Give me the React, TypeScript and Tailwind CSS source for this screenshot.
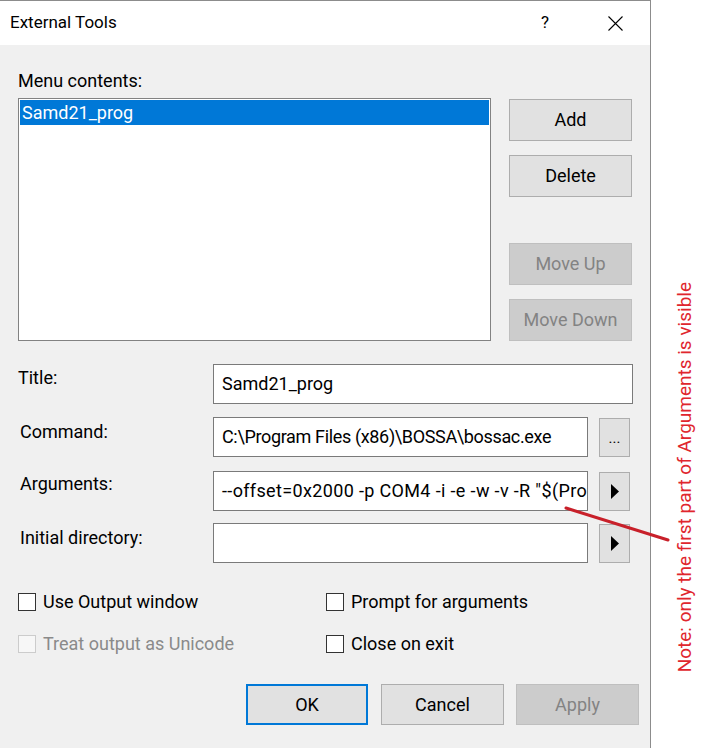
import type { FC, ReactNode } from 'react'

const Button: FC<{
  children: ReactNode
  disabled?: boolean
  focused?: boolean
  className?: string
}> = ({ children, disabled, focused, className = '' }) => {
  const look = disabled
    ? 'bg-[#cccccc] border border-[#bfbfbf] text-[#838383]'
    : focused
      ? 'bg-[#e1e1e1] border-2 border-[#0078d7] text-black'
      : 'bg-[#e1e1e1] border border-[#adadad] text-black'
  return (
    <div className={`flex items-center justify-center leading-[24px] ${look} ${className}`}>{children}</div>
  )
}

const Check: FC<{ label: string; disabled?: boolean }> = ({ label, disabled }) => (
  <div className="flex items-center h-[18px] gap-[7px]">
    <div
      className={
        disabled
          ? 'w-[18px] h-[18px] border border-[#cccccc] bg-[#f7f7f7]'
          : 'w-[18px] h-[18px] border border-[#333333] bg-white'
      }
    />
    <span className={disabled ? 'leading-[24px] text-[#8a8a8a]' : 'leading-[24px] text-black'}>{label}</span>
  </div>
)

const Arrow = () => (
  <svg width="8" height="15" viewBox="0 0 8 15">
    <polygon points="0,0 8,7.5 0,15" fill="#000" />
  </svg>
)

const Field: FC<{ value?: string; className: string; textClass?: string }> = ({ value, className, textClass = '' }) => (
  <div className={`bg-white border border-[#7a7a7a] overflow-hidden whitespace-nowrap pl-[8px] flex items-center ${className}`}>
    <span className={`leading-[24px] ${textClass}`}>{value}</span>
  </div>
)

export default function App() {
  return (
    <div className="relative w-[720px] h-[748px] bg-white flex overflow-hidden font-['Roboto',sans-serif] text-[18px] text-black">
      <div className="w-[651px] h-full flex flex-col border-t border-r border-[#8c8c8c]">
        {/* caption bar */}
        <div className="h-[44px] bg-white flex items-center pl-[10px] pr-[27px] text-[17px]">
          <span>External Tools</span>
          <span className="ml-auto mr-[59px]">?</span>
          <svg width="15" height="15" viewBox="0 0 15 15">
            <path d="M0.5 0.5 L14.5 14.5 M14.5 0.5 L0.5 14.5" stroke="#000" strokeWidth="1.1" />
          </svg>
        </div>

        <div className="flex-1 bg-[#f0f0f0] pl-[18px] pt-[24px]">
          <div className="leading-[24px]">Menu contents:</div>

          <div className="flex mt-[5px]">
            <div className="w-[473px] h-[243px] border border-[#828282] bg-white p-[1px]">
              <div className="h-[25px] bg-[#0078d7] text-white pl-[2px] leading-[25px]">Samd21_prog</div>
            </div>
            <div className="ml-[18px] mt-[1px] w-[123px] flex flex-col">
              <Button className="h-[42px]">Add</Button>
              <Button className="h-[42px] mt-[14px]">Delete</Button>
              <Button disabled className="h-[42px] mt-[46px]">Move Up</Button>
              <Button disabled className="h-[42px] mt-[14px]">Move Down</Button>
            </div>
          </div>

          <div className="flex items-start mt-[23px]">
            <div className="w-[195px] pt-[2px] leading-[24px]">Title:</div>
            <Field value="Samd21_prog" className="w-[420px] h-[40px]" />
          </div>

          <div className="flex items-start mt-[13px]">
            <div className="w-[195px] pl-[2px] pt-[3px] leading-[24px]">Command:</div>
            <Field
              value="C:\Program Files (x86)\BOSSA\bossac.exe"
              className="w-[375px] h-[40px]"
              textClass="tracking-[-0.35px]"
            />
            <Button className="ml-[11px] mt-[1px] w-[31px] h-[39px] text-[15px]">...</Button>
          </div>

          <div className="flex items-start mt-[14px]">
            <div className="w-[195px] pl-[2px] pt-[1px] leading-[24px]">Arguments:</div>
            <Field
              value={'--offset=0x2000 -p COM4 -i -e -w -v -R "$(Pro'}
              className="w-[375px] h-[40px]"
              textClass="tracking-[0.35px]"
            />
            <Button className="ml-[11px] mt-[1px] w-[31px] h-[39px]">
              <Arrow />
            </Button>
          </div>

          <div className="flex items-start mt-[12px]">
            <div className="w-[195px] pl-[2px] pt-[3px] leading-[24px]">Initial directory:</div>
            <Field className="w-[375px] h-[40px]" />
            <Button className="ml-[11px] mt-[1px] w-[31px] h-[39px]">
              <Arrow />
            </Button>
          </div>

          <div className="grid grid-cols-[308px_1fr] gap-y-[24px] mt-[30px]">
            <Check label="Use Output window" />
            <Check label="Prompt for arguments" />
            <Check label="Treat output as Unicode" disabled />
            <Check label="Close on exit" />
          </div>

          <div className="flex mt-[31px] ml-[228px]">
            <Button focused className="w-[122px] h-[41px]">OK</Button>
            <Button className="ml-[13px] w-[123px] h-[41px]">Cancel</Button>
            <Button disabled className="ml-[12px] w-[123px] h-[41px]">Apply</Button>
          </div>
        </div>
      </div>

      {/* side note */}
      <div className="flex-1 pt-[282px] pl-[22px]">
        <div className="w-[24px] leading-[24px] text-[19px] text-[#e0262d] whitespace-nowrap [writing-mode:vertical-rl] rotate-180">
          Note: only the first part of Arguments is visible
        </div>
      </div>

      <svg className="absolute inset-0 pointer-events-none" width="720" height="748">
        <line x1="566" y1="508" x2="668" y2="540" stroke="#c8202a" strokeWidth="3" strokeLinecap="round" />
      </svg>
    </div>
  )
}
